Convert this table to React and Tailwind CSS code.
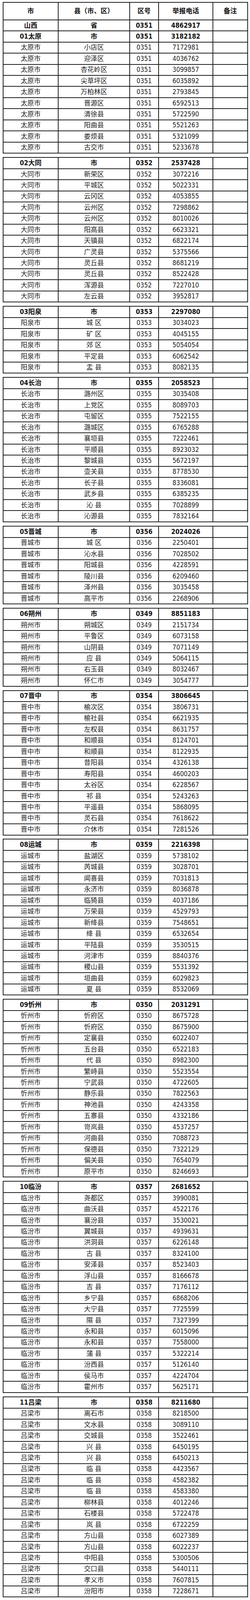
import React from 'react';

// 山西省各市县举报电话一览
const SECTIONS = [
  {
    head: ['01太原', '市', '0351', '3182182'],
    city: '太原市',
    code: '0351',
    rows: [
      ['小店区', '7172981'], ['迎泽区', '4036762'], ['杏花岭区', '3099857'], ['尖草坪区', '6035892'],
      ['万柏林区', '2793845'], ['晋源区', '6592513'], ['清徐县', '5722590'], ['阳曲县', '5521263'],
      ['娄烦县', '5321099'], ['古交市', '5233678'],
    ],
  },
  {
    head: ['02大同', '市', '0352', '2537428'],
    city: '大同市',
    code: '0352',
    rows: [
      ['新荣区', '3072216'], ['平城区', '5022331'], ['云冈区', '4053855'], ['云州区', '7298862'],
      ['云州区', '8010026'], ['阳高县', '6623321'], ['天镇县', '6822174'], ['广灵县', '5375566'],
      ['灵丘县', '8681219'], ['灵丘县', '8522428'], ['浑源县', '7227010'], ['左云县', '3952817'],
    ],
  },
  {
    head: ['03阳泉', '市', '0353', '2297080'],
    city: '阳泉市',
    code: '0353',
    rows: [
      ['城 区', '3034023'], ['矿 区', '4045155'], ['郊 区', '5054054'], ['平定县', '6062542'], ['盂 县', '8082135'],
    ],
  },
  {
    head: ['04长治', '市', '0355', '2058523'],
    city: '长治市',
    code: '0355',
    rows: [
      ['潞州区', '3035408'], ['上党区', '8089703'], ['屯留区', '7522155'], ['潞城区', '6765288'],
      ['襄垣县', '7222461'], ['平顺县', '8923032'], ['黎城县', '5672197'], ['壶关县', '8778530'],
      ['长子县', '8336081'], ['武乡县', '6385235'], ['沁 县', '7028899'], ['沁源县', '7832164'],
    ],
  },
  {
    head: ['05晋城', '市', '0356', '2024026'],
    city: '晋城市',
    code: '0356',
    rows: [
      ['城 区', '2250401'], ['沁水县', '7028502'], ['阳城县', '4228591'], ['陵川县', '6209460'],
      ['泽州县', '3035458'], ['高平市', '2268906'],
    ],
  },
  {
    head: ['06朔州', '市', '0349', '8851183'],
    city: '朔州市',
    code: '0349',
    rows: [
      ['朔城区', '2151734'], ['平鲁区', '6073158'], ['山阴县', '7071149'], ['应 县', '5064115'],
      ['右玉县', '8032467'], ['怀仁市', '3054777'],
    ],
  },
  {
    head: ['07晋中', '市', '0354', '3806645'],
    city: '晋中市',
    code: '0354',
    rows: [
      ['榆次区', '3806731'], ['榆社县', '6621935'], ['左权县', '8631757'], ['和顺县', '8124701'],
      ['和顺县', '8122935'], ['昔阳县', '4326138'], ['寿阳县', '4600203'], ['太谷区', '6228567'],
      ['祁 县', '5243263'], ['平遥县', '5868095'], ['灵石县', '7618622'], ['介休市', '7281526'],
    ],
  },
  {
    head: ['08运城', '市', '0359', '2216398'],
    city: '运城市',
    code: '0359',
    rows: [
      ['盐湖区', '5738102'], ['芮城县', '3028701'], ['闻喜县', '7031813'], ['永济市', '8036878'],
      ['临猗县', '4037186'], ['万荣县', '4529793'], ['新绛县', '7548651'], ['绛 县', '6532654'],
      ['平陆县', '3530515'], ['河津市', '8840376'], ['稷山县', '5531392'], ['垣曲县', '6029823'],
      ['夏 县', '8532069'],
    ],
  },
  {
    head: ['09忻州', '市', '0350', '2031291'],
    city: '忻州市',
    code: '0350',
    rows: [
      ['忻府区', '8675728'], ['忻府区', '8675900'], ['定襄县', '6022407'], ['五台县', '6522183'],
      ['代 县', '8982300'], ['繁峙县', '5523554'], ['宁武县', '4722605'], ['静乐县', '7822563'],
      ['神池县', '4243358'], ['五寨县', '4332186'], ['岢岚县', '4537257'], ['河曲县', '7088723'],
      ['保德县', '7322129'], ['偏关县', '7654079'], ['原平市', '8246693'],
    ],
  },
  {
    head: ['10临汾', '市', '0357', '2681652'],
    city: '临汾市',
    code: '0357',
    rows: [
      ['尧都区', '3990081'], ['曲沃县', '4522176'], ['襄汾县', '3530021'], ['翼城县', '4939631'],
      ['洪洞县', '6226148'], ['古 县', '8324100'], ['安泽县', '8523403'], ['浮山县', '8166678'],
      ['吉 县', '7176112'], ['乡宁县', '6868206'], ['大宁县', '7725599'], ['隰 县', '7327399'],
      ['永和县', '6015096'], ['永和县', '7558000'], ['蒲 县', '5322214'], ['汾西县', '5126140'],
      ['侯马市', '4224704'], ['霍州市', '5625171'],
    ],
  },
  {
    head: ['11吕梁', '市', '0358', '8211680'],
    city: '吕梁市',
    code: '0358',
    rows: [
      ['离石市', '8218500'], ['文水县', '3089110'], ['交城县', '3522461'], ['兴 县', '6450195'],
      ['兴 县', '6450213'], ['临 县', '4423567'], ['临 县', '4582382'], ['临 县', '4583380'],
      ['柳林县', '4012246'], ['石楼县', '5722478'], ['岚 县', '6722259'], ['方山县', '6027389'],
      ['方山县', '6022237'], ['中阳县', '5300506'], ['交口县', '5440111'], ['孝义市', '7607815'],
      ['汾阳市', '7228671'],
    ],
  },
];

function Row({ cells, bold, first, header }) {
  const height = header
    ? 'h-[1.0487vh]'
    : first
      ? 'h-[0.6549vh]'
      : 'h-[0.6945vh] border-t-2 border-[#1f1f1f]';
  return (
    <div className={`grid grid-cols-[139px_183px_74px_139px_1fr] ${height}`}>
      {cells.map((text, i) => (
        <div
          key={i}
          className={`flex items-center justify-center leading-none whitespace-pre ${
            i > 0 ? 'border-l-2 border-[#1f1f1f]' : ''
          } ${bold ? 'font-bold text-[#111]' : 'text-[#222]'}`}
        >
          {text}
        </div>
      ))}
    </div>
  );
}

function Section({ section, top }) {
  return (
    <div className="border-2 border-[#1f1f1f]">
      {top && (
        <>
          <Row header bold cells={['市', '县（市、区）', '区号', '举报电话', '备注']} />
          <Row bold cells={['山西', '省', '0351', '4862917', '']} />
        </>
      )}
      <Row bold first={!top} cells={[...section.head, '']} />
      {section.rows.map(([county, phone], i) => (
        <Row key={i} cells={[section.city, county, section.code, phone, '']} />
      ))}
    </div>
  );
}

export default function App() {
  return (
    <div className="bg-white pl-[7px] pt-[0.1187vh] font-['DejaVu_Sans_Condensed','Liberation_Sans','Noto_Sans_CJK_SC',sans-serif] text-[17px]">
      <div className="flex w-[628px] flex-col gap-[0.2176vh]">
        {SECTIONS.map((s, i) => (
          <Section key={s.head[0]} section={s} top={i === 0} />
        ))}
      </div>
    </div>
  );
}
